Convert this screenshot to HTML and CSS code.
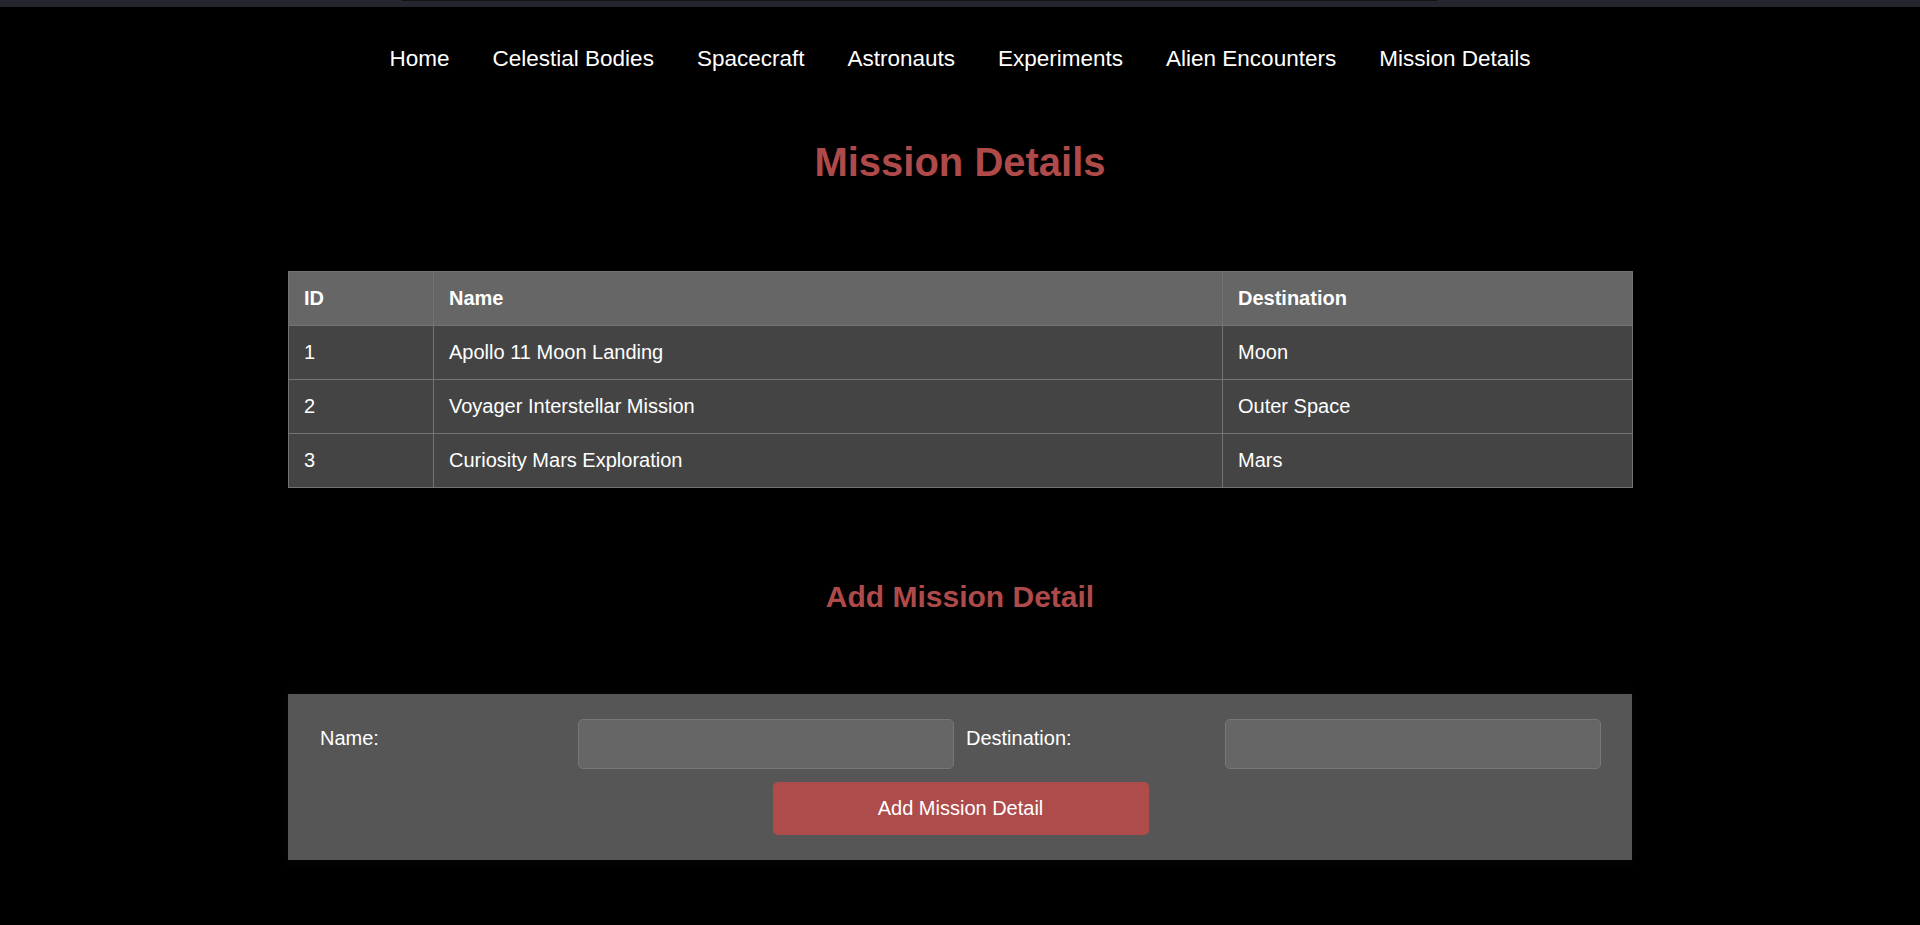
FILE: index.html
```html
<!DOCTYPE html>
<html lang="en">
<head>
<meta charset="utf-8">
<title>Mission Details</title>
<link rel="stylesheet" href="styles.css">
</head>
<body>
<div class="topbar"><div class="topbar-thumb"></div></div>
<nav class="nav">
  <a href="#">Home</a>
  <a href="#">Celestial Bodies</a>
  <a href="#">Spacecraft</a>
  <a href="#">Astronauts</a>
  <a href="#">Experiments</a>
  <a href="#">Alien Encounters</a>
  <a href="#">Mission Details</a>
</nav>
<main class="main">
  <h1 class="title">Mission Details</h1>
  <table class="missions">
    <colgroup>
      <col class="col-id">
      <col class="col-name">
      <col class="col-dest">
    </colgroup>
    <thead>
      <tr><th>ID</th><th>Name</th><th>Destination</th></tr>
    </thead>
    <tbody>
      <tr><td>1</td><td>Apollo 11 Moon Landing</td><td>Moon</td></tr>
      <tr><td>2</td><td>Voyager Interstellar Mission</td><td>Outer Space</td></tr>
      <tr><td>3</td><td>Curiosity Mars Exploration</td><td>Mars</td></tr>
    </tbody>
  </table>
  <h2 class="subtitle">Add Mission Detail</h2>
  <form class="add-form">
    <label class="lbl" for="name">Name:</label>
    <input class="inp" id="name" type="text">
    <label class="lbl lbl-dest" for="dest">Destination:</label>
    <input class="inp" id="dest" type="text">
    <button class="btn" type="button">Add Mission Detail</button>
  </form>
</main>
</body>
</html>
```

FILE: styles.css
```css
* { box-sizing: border-box; }

html, body {
  margin: 0;
  padding: 0;
  background: #000;
  color: #fff;
  font-family: "Liberation Sans", Arial, sans-serif;
}

.topbar {
  height: 7px;
  background: #23262d;
}
.topbar-thumb {
  margin-left: 402px;
  width: 1035px;
  height: 1px;
  background: #111214;
}

.nav {
  display: flex;
  justify-content: center;
  gap: 43px;
  padding-top: 39px;
  font-size: 22.5px;
  line-height: 26px;
}
.nav a {
  color: #fff;
  text-decoration: none;
}

.main {
  width: 1344px;
  margin: 0 auto;
  padding-bottom: 40px;
}

.title {
  margin: 67px 0 86px;
  text-align: center;
  font-size: 40px;
  line-height: 46px;
  font-weight: bold;
  color: #ae4a4a;
}

.missions {
  width: 100%;
  border-collapse: collapse;
  table-layout: fixed;
  font-size: 20px;
  line-height: 23px;
}
.col-id { width: 145px; }
.col-name { width: 789px; }
.col-dest { width: 410px; }

.missions th,
.missions td {
  border: 1px solid #737373;
  padding: 15px 15px 15px 15px;
  text-align: left;
}
.missions th {
  background: #666;
  font-weight: bold;
}
.missions td {
  background: #444;
}

.subtitle {
  margin: 92px 0 80px;
  text-align: center;
  font-size: 30px;
  line-height: 34px;
  font-weight: bold;
  color: #ae4a4a;
}

.add-form {
  display: grid;
  grid-template-columns: 258px 376px 271px 376px;
  row-gap: 13px;
  padding: 25px 31px 25px 32px;
  background: #565656;
  box-shadow: 0 0 12px rgba(255, 255, 255, 0.04);
  font-size: 20px;
  line-height: 23px;
}

.lbl {
  margin-top: 8px;
  align-self: start;
}
.lbl-dest {
  padding-left: 12px;
}

.inp {
  height: 50px;
  background: #666;
  border: 1px solid #777;
  border-radius: 5px;
  color: #fff;
  font: inherit;
  padding: 0 10px;
}

.btn {
  grid-column: 1 / -1;
  justify-self: center;
  width: 376px;
  height: 53px;
  background: #ae4b4b;
  color: #fff;
  border: none;
  border-radius: 5px;
  font: inherit;
  font-size: 20px;
}
```
